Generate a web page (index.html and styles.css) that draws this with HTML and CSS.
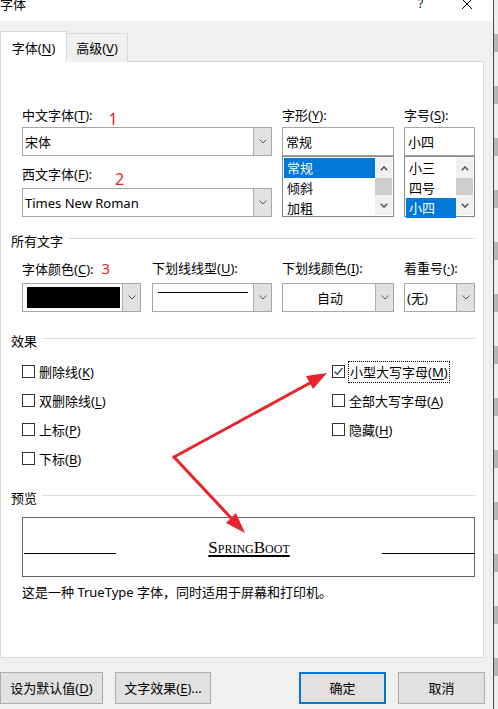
FILE: index.html
```html
<!DOCTYPE html>
<html lang="zh">
<head>
    <meta charset="utf-8">
    <title>字体</title>
    <link rel="stylesheet" href="styles.css">
</head>
<body>
<div class="window">
    <div class="titlebar">
        <span class="title">字体</span>
        <span class="help">?</span>
        <svg class="close" width="12" height="12" viewBox="0 0 12 12">
            <path d="M1 1 L11 11 M11 1 L1 11" stroke="#000" stroke-width="1" fill="none"/>
        </svg>
    </div>
    <div class="frame">
        <div class="tabs">
            <div class="tab active">字体(<u>N</u>)</div>
            <div class="tab">高级(<u>V</u>)</div>
        </div>
        <div class="panel">
            <div class="font-row">
                <div class="col col-face">
                    <div class="lbl">中文字体(<u>T</u>):<span class="mark mark-1">1</span></div>
                    <div class="combo">
                        <span class="value">宋体</span>
                        <span class="drop"><svg width="8" height="5" viewBox="0 0 8 5"><path d="M0.5 0.5 L4 4 L7.5 0.5" stroke="#555" fill="none"/></svg></span>
                    </div>
                    <div class="lbl lbl-next">西文字体(<u>F</u>):<span class="mark mark-2">2</span></div>
                    <div class="combo">
                        <span class="value">Times New Roman</span>
                        <span class="drop"><svg width="8" height="5" viewBox="0 0 8 5"><path d="M0.5 0.5 L4 4 L7.5 0.5" stroke="#555" fill="none"/></svg></span>
                    </div>
                </div>
                <div class="col col-style">
                    <div class="lbl">字形(<u>Y</u>):</div>
                    <div class="textbox">常规</div>
                    <div class="listbox">
                        <ul class="items">
                            <li class="sel">常规</li>
                            <li>倾斜</li>
                            <li>加粗</li>
                        </ul>
                        <div class="vscroll">
                            <span class="sb-btn"><svg width="8" height="5" viewBox="0 0 8 5"><path d="M0.8 4.2 L4 1 L7.2 4.2" stroke="#555" stroke-width="1.6" fill="none"/></svg></span>
                            <span class="sb-thumb"></span>
                            <span class="sb-btn"><svg width="8" height="5" viewBox="0 0 8 5"><path d="M0.8 0.8 L4 4 L7.2 0.8" stroke="#555" stroke-width="1.6" fill="none"/></svg></span>
                        </div>
                    </div>
                </div>
                <div class="col col-size">
                    <div class="lbl">字号(<u>S</u>):</div>
                    <div class="textbox">小四</div>
                    <div class="listbox">
                        <ul class="items">
                            <li>小三</li>
                            <li>四号</li>
                            <li class="sel">小四</li>
                        </ul>
                        <div class="vscroll">
                            <span class="sb-btn"><svg width="8" height="5" viewBox="0 0 8 5"><path d="M0.8 4.2 L4 1 L7.2 4.2" stroke="#555" stroke-width="1.6" fill="none"/></svg></span>
                            <span class="sb-thumb"></span>
                            <span class="sb-btn"><svg width="8" height="5" viewBox="0 0 8 5"><path d="M0.8 0.8 L4 4 L7.2 0.8" stroke="#555" stroke-width="1.6" fill="none"/></svg></span>
                        </div>
                    </div>
                </div>
            </div>

            <div class="group group-all">
                <div class="group-title">所有文字</div>
                <div class="all-row">
                    <div class="col col-color">
                        <div class="lbl">字体颜色(<u>C</u>):<span class="mark mark-3">3</span></div>
                        <div class="combo">
                            <span class="swatch"></span>
                            <span class="drop"><svg width="8" height="5" viewBox="0 0 8 5"><path d="M0.5 0.5 L4 4 L7.5 0.5" stroke="#555" fill="none"/></svg></span>
                        </div>
                    </div>
                    <div class="col col-uline">
                        <div class="lbl">下划线线型(<u>U</u>):</div>
                        <div class="combo">
                            <span class="line-sample"></span>
                            <span class="drop"><svg width="8" height="5" viewBox="0 0 8 5"><path d="M0.5 0.5 L4 4 L7.5 0.5" stroke="#555" fill="none"/></svg></span>
                        </div>
                    </div>
                    <div class="col col-ucolor">
                        <div class="lbl">下划线颜色(<u>I</u>):</div>
                        <div class="combo">
                            <span class="value center">自动</span>
                            <span class="drop"><svg width="8" height="5" viewBox="0 0 8 5"><path d="M0.5 0.5 L4 4 L7.5 0.5" stroke="#555" fill="none"/></svg></span>
                        </div>
                    </div>
                    <div class="col col-emph">
                        <div class="lbl">着重号(<u>·</u>):</div>
                        <div class="combo">
                            <span class="value">(无)</span>
                            <span class="drop"><svg width="8" height="5" viewBox="0 0 8 5"><path d="M0.5 0.5 L4 4 L7.5 0.5" stroke="#555" fill="none"/></svg></span>
                        </div>
                    </div>
                </div>
            </div>

            <div class="group group-effects">
                <div class="group-title">效果</div>
                <div class="effects">
                    <div class="check"><span class="box"></span>删除线(<u>K</u>)</div>
                    <div class="check"><span class="box checked"><svg width="11" height="11" viewBox="0 0 11 11"><path d="M1.5 5.5 L4.2 8.2 L9.5 2" stroke="#444" stroke-width="1.3" fill="none"/></svg></span><span class="focus">小型大写字母(<u>M</u>)</span></div>
                    <div class="check"><span class="box"></span>双删除线(<u>L</u>)</div>
                    <div class="check"><span class="box"></span>全部大写字母(<u>A</u>)</div>
                    <div class="check"><span class="box"></span>上标(<u>P</u>)</div>
                    <div class="check"><span class="box"></span>隐藏(<u>H</u>)</div>
                    <div class="check"><span class="box"></span>下标(<u>B</u>)</div>
                </div>
            </div>

            <div class="group group-preview">
                <div class="group-title">预览</div>
                <div class="preview">
                    <span class="rule"></span>
                    <span class="sample">SpringBoot</span>
                    <span class="rule"></span>
                </div>
                <p class="desc">这是一种 TrueType 字体，同时适用于屏幕和打印机。</p>
            </div>
        </div>
        <div class="buttons">
            <button class="btn btn-default">设为默认值(<u>D</u>)</button>
            <button class="btn btn-effects">文字效果(<u>E</u>)...</button>
            <button class="btn btn-ok">确定</button>
            <button class="btn btn-cancel">取消</button>
        </div>
    </div>
</div>

<!-- annotation arrows drawn over the dialog -->
<svg class="arrows" width="498" height="709" viewBox="0 0 498 709">
    <g stroke="#e8232b" stroke-width="3" fill="none" stroke-linecap="round">
        <path d="M174 457 L310 383"/>
        <path d="M174 457 L232 519"/>
    </g>
    <g fill="#e8232b">
        <polygon points="327,373 313,389 306,376"/>
        <polygon points="245,533 236,513 226,523"/>
    </g>
</svg>
</body>
</html>
```

FILE: styles.css
```css
* {
    margin: 0;
    padding: 0;
    box-sizing: border-box;
}

body {
    width: 498px;
    height: 709px;
    overflow: hidden;
    position: relative;
    font-family: "Noto Sans", "Noto Sans CJK SC", sans-serif;
    font-size: 13px;
    line-height: 16px;
    color: #000;
    background: repeating-linear-gradient(#ededed 0 34px, #b5b5b5 34px 52px);
}

u {
    text-decoration-thickness: 1px;
    text-underline-offset: 2px;
}

.window {
    width: 494px;
    height: 709px;
    background: #f0f0f0;
    border-right: 1px solid #4a4a4a;
}

/* title bar */
.titlebar {
    height: 21px;
    background: #fff;
    display: flex;
    align-items: flex-start;
    overflow: hidden;
}

.titlebar .title {
    margin-top: -4px;
}

.titlebar .help {
    margin: -4px 0 0 392px;
    font-size: 12px;
}

.titlebar .close {
    margin: -2px 0 0 38px;
}

/* tabs */
.frame {
    padding-top: 11px;
}

.tabs {
    display: flex;
    align-items: flex-end;
    height: 30px;
    margin-bottom: -1px;
}

.tab {
    height: 29px;
    padding-top: 6px;
    text-align: center;
    border: 1px solid #d9d9d9;
    border-bottom: none;
    background: #f0f0f0;
}

.tab.active {
    position: relative;
    z-index: 1;
    width: 67px;
    height: 31px;
    padding-top: 8px;
    background: #fff;
}

.tab + .tab {
    width: 61px;
    border-left: none;
}

.panel {
    width: 484px;
    height: 597px;
    background: #fff;
    border: 1px solid #d9d9d9;
}

/* font face / style / size */
.font-row {
    display: flex;
    margin-top: 45px;
    padding-left: 21px;
}

.col {
    display: flex;
    flex-direction: column;
}

.lbl {
    height: 16px;
    margin-bottom: 4px;
    white-space: nowrap;
}

.lbl-next {
    margin-top: 10px;
    margin-bottom: 6px;
}

.mark {
    display: inline-block;
    color: #e8232b;
    font-size: 16px;
    vertical-align: -5px;
}

.mark-1 { margin-left: 16px; }
.mark-2 { margin-left: 23px; vertical-align: -6px; }
.mark-3 { margin-left: 8px; font-size: 15px; vertical-align: 0; }

.col-face { width: 250px; }
.col-style { width: 112px; margin-left: 10px; }
.col-size { width: 71px; margin-left: 10px; }

.combo {
    height: 29px;
    display: flex;
    align-items: center;
    border: 1px solid #a6a6a6;
    background: #fff;
}

.combo .value {
    flex: 1;
    padding-left: 2px;
}

.combo .value.center {
    text-align: center;
}

.combo .drop {
    width: 18px;
    height: 27px;
    display: flex;
    align-items: center;
    justify-content: center;
    background: #e1e1e1;
    border-left: 1px solid #acacac;
    margin-left: auto;
}

.textbox {
    height: 29px;
    padding: 6px 0 0 3px;
    border: 1px solid #a6a6a6;
}

.listbox {
    height: 61px;
    padding: 1px;
    display: flex;
    border: 1px solid #828790;
}

.items {
    flex: 1;
    list-style: none;
}

.items li {
    height: 20px;
    padding: 2px 0 0 3px;
}

.items li.sel {
    background: #0078d7;
    color: #fff;
}

.vscroll {
    width: 17px;
    display: flex;
    flex-direction: column;
    background: #f0f0f0;
}

.sb-btn {
    height: 20px;
    display: flex;
    align-items: center;
    justify-content: center;
}

.sb-thumb {
    height: 17px;
    background: #cdcdcd;
}

/* group boxes */
.group-title {
    display: flex;
    align-items: flex-start;
    height: 16px;
    padding: 0 8px 0 10px;
    white-space: nowrap;
}

.group-title::after {
    content: "";
    flex: 1;
    height: 1px;
    margin: 5px 0 0 5px;
    background: #dcdcdc;
}

.group-all {
    margin-top: 16px;
}

.all-row {
    display: flex;
    margin-top: 11px;
    padding-left: 21px;
}

.all-row .lbl {
    margin-bottom: 7px;
}

.col-color { width: 119px; }
.col-uline { width: 120px; margin-left: 11px; }
.col-ucolor { width: 112px; margin-left: 10px; }
.col-emph { width: 71px; margin-left: 10px; }

.swatch {
    width: 93px;
    height: 21px;
    margin-left: 4px;
    background: #000;
}

.line-sample {
    width: 90px;
    height: 1px;
    margin: 0 0 10px 5px;
    background: #000;
}

/* effects */
.group-effects {
    margin-top: 21px;
}

.effects {
    display: grid;
    grid-template-columns: 310px auto;
    grid-auto-rows: 29px;
    margin-top: 8px;
    padding-left: 21px;
}

.check {
    display: flex;
    align-items: center;
    white-space: nowrap;
}

.box {
    width: 13px;
    height: 13px;
    margin-right: 4px;
    border: 1px solid #333;
    display: flex;
    align-items: center;
    justify-content: center;
}

.focus {
    padding: 2px 1px;
    outline: 1px dotted #000;
}

/* preview */
.group-preview {
    margin-top: 17px;
}

.preview {
    height: 60px;
    margin: 11px 8px 0 21px;
    padding: 0 0 22px 1px;
    display: flex;
    align-items: flex-end;
    justify-content: space-between;
    border: 1px solid #646464;
}

.rule {
    width: 92px;
    height: 1px;
    background: #000;
}

.sample {
    font-family: "Liberation Serif", serif;
    font-size: 17px;
    line-height: 17px;
    font-variant: small-caps;
    text-decoration: underline;
    text-decoration-thickness: 2px;
    text-underline-offset: 2px;
    margin-bottom: -2px;
}

.desc {
    margin: 7px 0 0 21px;
}

/* buttons */
.buttons {
    display: flex;
    margin-top: 14px;
}

.btn {
    height: 32px;
    font: inherit;
    color: #000;
    background: #e1e1e1;
    border: 1px solid #adadad;
}

.btn-default { width: 103px; }
.btn-effects { width: 96px; margin-left: 12px; }
.btn-ok { width: 87px; margin-left: 88px; border: 2px solid #0078d7; }
.btn-cancel { width: 87px; margin-left: 12px; }

.arrows {
    position: absolute;
    left: 0;
    top: 0;
    pointer-events: none;
}
```
